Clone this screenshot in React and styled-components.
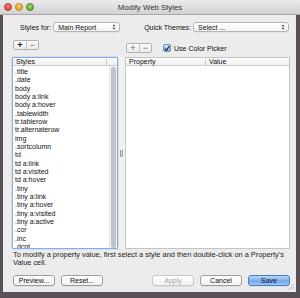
import React from 'react';
import styled, { createGlobalStyle } from 'styled-components';

const Global = createGlobalStyle`
  html, body {
    margin: 0;
    padding: 0;
    background: #5a5058;
    overflow: hidden;
  }
  * { box-sizing: border-box; }
`;

const Screen = styled.div`
  width: 300px;
  height: 298px;
  display: flex;
  flex-direction: column;
  font-family: "Liberation Sans", Arial, sans-serif;
  font-size: 7px;
  color: #111;
`;

const TitleBar = styled.div`
  height: 15px;
  flex: none;
  display: flex;
  align-items: center;
  position: relative;
  padding-left: 4px;
  gap: 3px;
  background: linear-gradient(#ebebeb, #d2d2d2);
  border-bottom: 1px solid #a8a8a8;
`;

const Light = styled.span`
  width: 8px;
  height: 8px;
  border-radius: 50%;
  background: radial-gradient(circle at 50% 35%, ${p => p.$hi} 0%, ${p => p.$c} 70%);
  border: 0.5px solid ${p => p.$b};
`;

const Title = styled.div`
  position: absolute;
  left: 0;
  right: 0;
  text-align: center;
  font-size: 7.8px;
  color: #333;
  pointer-events: none;
`;

const Body = styled.div`
  height: 277px;
  margin: 0 4px 0 3px;
  background: #ececec;
  display: flex;
  flex-direction: column;
  padding: 7px 6px 0 9px;
  position: relative;
`;

const TopRow = styled.div`
  display: flex;
  align-items: center;
  height: 10px;
`;

const Label = styled.span`
  white-space: nowrap;
  margin-right: 2px;
  margin-left: ${p => p.$ml || 0}px;
`;

const Select = styled.div`
  width: ${p => p.$w}px;
  height: 10px;
  background: linear-gradient(#ffffff, #f3f3f3);
  border: 1px solid #b4b4b4;
  border-radius: 3px;
  display: flex;
  align-items: center;
  justify-content: space-between;
  padding: 0 3px 0 4px;
  box-shadow: 0 0.5px 0 rgba(0,0,0,0.08);
`;

const Arrows = () => (
  <svg width="4" height="6" viewBox="0 0 4 6">
    <path d="M0.5 2.3 L2 0.6 L3.5 2.3 Z M0.5 3.7 L2 5.4 L3.5 3.7 Z" fill="#333" />
  </svg>
);

const Columns = styled.div`
  display: flex;
  margin-top: 8px;
  height: 209px;
`;

const LeftCol = styled.div`
  width: 106px;
  display: flex;
  flex-direction: column;
`;

const RightCol = styled.div`
  flex: 1;
  display: flex;
  flex-direction: column;
  padding-top: 3px;
`;

const Toolbar = styled.div`
  display: flex;
  align-items: center;
  height: 10px;
  margin-left: ${p => p.$ml || 0}px;
`;

const SegGroup = styled.div`
  display: flex;
  border: 1px solid #b0b0b0;
  border-radius: 2px;
  overflow: hidden;
  height: 10px;
`;

const Seg = styled.div`
  width: 12px;
  display: flex;
  align-items: center;
  justify-content: center;
  background: linear-gradient(#fafafa, #ececec);
  color: ${p => (p.$dim ? '#999' : '#222')};
  font-size: 9px;
  font-weight: bold;
  line-height: 1;
  & + & { border-left: 1px solid #c4c4c4; }
`;

const Check = styled.span`
  width: 8px;
  height: 8px;
  margin-left: 11px;
  margin-right: 3px;
  border: 1px solid #6b8fbf;
  border-radius: 2px;
  background: linear-gradient(#cfe2fa, #8db6ea);
  display: flex;
  align-items: center;
  justify-content: center;
`;

const ListBox = styled.div`
  margin-top: 7px;
  flex: 1;
  border: 1.5px solid #86aee4;
  border-radius: 1px;
  box-shadow: 0 0 0 0.5px #b7d0f0;
  background: #fff;
  display: flex;
  flex-direction: column;
  overflow: hidden;
  position: relative;
`;

const Header = styled.div`
  height: 8px;
  flex: none;
  display: flex;
  align-items: center;
  background: linear-gradient(#ffffff, #eeeeee);
  border-bottom: 1px solid #cfcfcf;
`;

const HeadCell = styled.div`
  width: ${p => (p.$w ? `${p.$w}px` : 'auto')};
  flex: ${p => (p.$w ? 'none' : 1)};
  padding-left: 3px;
  border-right: ${p => (p.$last ? 'none' : '1px solid #c8c8c8')};
  line-height: 6px;
  color: #111;
`;

const ListInner = styled.div`
  flex: 1;
  display: flex;
  overflow: hidden;
`;

const Items = styled.div`
  flex: 1;
  padding-top: 2px;
  padding-left: 2px;
  overflow: hidden;
`;

const Item = styled.div`
  height: 8.33px;
  line-height: 8.33px;
  white-space: nowrap;
`;

const Scroll = styled.div`
  width: 8px;
  background: #f2f2f2;
  border-left: 1px solid #e2e2e2;
  padding: 1px 1px 0 1px;
  display: flex;
`;

const Thumb = styled.div`
  flex: 1;
  background: #c2c2c2;
  border-radius: 3px;
`;

const Splitter = styled.div`
  width: 8px;
  display: flex;
  align-items: center;
  justify-content: center;
  background: #f1f1f1;
  margin-top: 17px;
  border-right: 1px solid #c9c9c9;
`;

const Grip = styled.div`
  width: 3px;
  height: 7px;
  background: repeating-linear-gradient(90deg, #9a9a9a 0 1px, #dcdcdc 1px 2px);
`;

const TableBox = styled.div`
  margin-top: 4px;
  flex: 1;
  background: #fff;
  border: 1px solid #c4c4c4;
  border-left: none;
  display: flex;
  flex-direction: column;
`;

const Help = styled.div`
  margin-top: 2px;
  padding-left: 1px;
  font-size: 7.4px;
  line-height: 8px;
  color: #222;
  white-space: nowrap;
`;

const ButtonRow = styled.div`
  display: flex;
  align-items: center;
  margin-top: 8px;
  padding-left: 1px;
`;

const Button = styled.div`
  width: 42px;
  height: 11px;
  border-radius: 3px;
  display: flex;
  align-items: center;
  justify-content: center;
  margin-left: ${p => p.$ml || 0}px;
  border: 1px solid ${p => (p.$primary ? '#4d7fc4' : p.$disabled ? '#c9c9c9' : '#9e9e9e')};
  background: ${p =>
    p.$primary
      ? 'linear-gradient(#b8d6f8, #7fb0ec 50%, #6aa2ea 51%, #9ac6f6)'
      : 'linear-gradient(#ffffff, #f1f1f1)'};
  color: ${p => (p.$disabled ? '#a8a8a8' : '#111')};
  box-shadow: 0 0.5px 0.5px rgba(0,0,0,0.12);
`;

const Resize = styled.svg`
  position: absolute;
  right: 1px;
  bottom: 1px;
`;

const styles = [
  '.title', '.date', 'body', 'body a:link', 'body a:hover', '.tablewidth',
  'tr.tablerow', 'tr.alternaterow', 'img', '.sortcolumn', 'td', 'td a:link',
  'td a:visited', 'td a:hover', '.tiny', '.tiny a:link', '.tiny a:hover',
  '.tiny a:visited', '.tiny a:active', '.cor', '.inc', '.dcnt'
];

const App = () => {
  return (
    <Screen>
      <Global />
      <TitleBar>
        <Light $c="#e0443e" $hi="#ff8a80" $b="#c23a33" />
        <Light $c="#dea123" $hi="#ffd27a" $b="#bf8a20" />
        <Light $c="#6ea73a" $hi="#a9de7a" $b="#4f8a25" />
        <Title>Modify Web Styles</Title>
      </TitleBar>
      <Body>
        <TopRow>
          <Label $ml={8}>Styles for:</Label>
          <Select $w={67}>Main Report<Arrows /></Select>
          <Label $ml={24}>Quick Themes:</Label>
          <Select $w={96}>Select ...<Arrows /></Select>
        </TopRow>
        <Columns>
          <LeftCol>
            <Toolbar $ml={1}>
              <SegGroup>
                <Seg>+</Seg>
                <Seg $dim>−</Seg>
              </SegGroup>
            </Toolbar>
            <ListBox>
              <Header>
                <HeadCell $w={94}>Styles</HeadCell>
                <HeadCell $last />
              </Header>
              <ListInner>
                <Items>
                  {styles.map(s => <Item key={s}>{s}</Item>)}
                </Items>
                <Scroll><Thumb /></Scroll>
              </ListInner>
            </ListBox>
          </LeftCol>
          <Splitter><Grip /></Splitter>
          <RightCol>
            <Toolbar>
              <SegGroup>
                <Seg $dim>+</Seg>
                <Seg $dim>−</Seg>
              </SegGroup>
              <Check>
                <svg width="7" height="7" viewBox="0 0 7 7">
                  <path d="M1 3.6 L2.8 5.6 L6.4 0.6" stroke="#1a1a1a" strokeWidth="1.3" fill="none" />
                </svg>
              </Check>
              <span>Use Color Picker</span>
            </Toolbar>
            <TableBox>
              <Header>
                <HeadCell $w={80}>Property</HeadCell>
                <HeadCell $last>Value</HeadCell>
              </Header>
            </TableBox>
          </RightCol>
        </Columns>
        <Help>
          To modify a property value, first select a style and then double-click on a Property's
          <br />
          Value cell.
        </Help>
        <ButtonRow>
          <Button>Preview...</Button>
          <Button $ml={6}>Reset...</Button>
          <Button $ml={49} $disabled>Apply</Button>
          <Button $ml={6}>Cancel</Button>
          <Button $ml={6} $primary>Save</Button>
        </ButtonRow>
        <Resize width="8" height="8" viewBox="0 0 8 8">
          <path d="M1 7 L7 1 M4 7 L7 4 M6.5 7 L7 6.5" stroke="#aaa" strokeWidth="0.7" />
        </Resize>
      </Body>
    </Screen>
  );
};

export default App;
